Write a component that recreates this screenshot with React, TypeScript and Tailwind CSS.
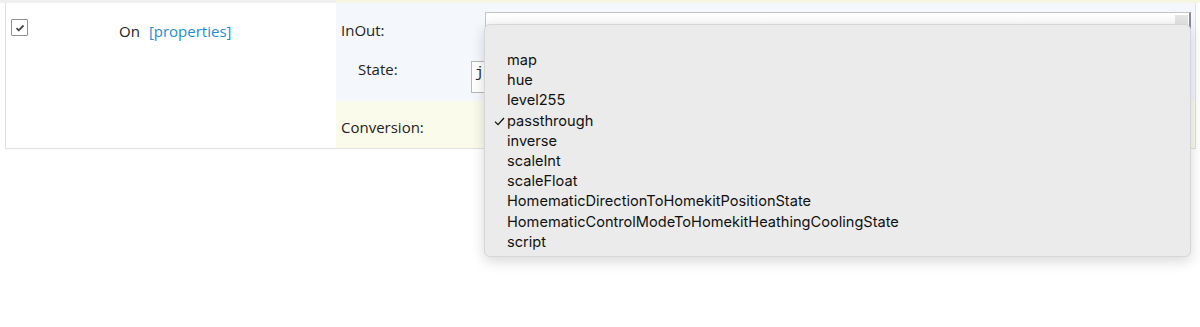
const OPTIONS = [
  'map',
  'hue',
  'level255',
  'passthrough',
  'inverse',
  'scaleInt',
  'scaleFloat',
  'HomematicDirectionToHomekitPositionState',
  'HomematicControlModeToHomekitHeathingCoolingState',
  'script',
];

const SELECTED = 'passthrough';

// Small checkbox like the browser default
const Checkbox = () => (
  <div className="w-[17px] h-[17px] border border-[#8f8f8f] rounded-[1px] bg-white flex items-center justify-center">
    <svg width="10" height="8" viewBox="0 0 10 8">
      <path d="M1.5 4.2 L3.8 6.3 L8.5 1.5" fill="none" stroke="#444" strokeWidth="1.8" />
    </svg>
  </div>
);

// Native-looking open select list
const OptionList = () => (
  <div className="absolute left-[484px] top-[24px] w-[707px] h-[233px] bg-[#ebebeb] rounded-[6px] border border-[#d6d6d6] shadow-[0_4px_14px_rgba(0,0,0,0.16)] pt-[25px] font-['Inter',sans-serif] text-[14.6px] text-[#111]">
    {OPTIONS.map((opt) => (
      <div key={opt} className="relative h-[20.2px] leading-[20.2px] pl-[22px]">
        {opt === SELECTED && (
          <svg className="absolute left-[9px] top-[6px]" width="11" height="9" viewBox="0 0 11 9">
            <path d="M1 4.6 L4 7.6 L10 1" fill="none" stroke="#111" strokeWidth="1.3" />
          </svg>
        )}
        {opt}
      </div>
    ))}
  </div>
);

export default function App() {
  return (
    <div className="relative w-[1200px] h-[327px] overflow-hidden bg-white font-['Open_Sans',sans-serif] text-[15px] text-[#222]">
      {/* bottom edge of the row above */}
      <div className="flex h-[3px]">
        <div className="w-[336px] bg-[#efefef]" />
        <div className="flex-1 bg-[#f6f6e2]" />
      </div>

      <div className="ml-[5px] w-[1191px] h-[146px] flex border-x border-b border-[#e0e0e0]">
        {/* enable + name */}
        <div className="w-[330px] flex items-start">
          <div className="ml-[5px] mt-[16px]">
            <Checkbox />
          </div>
          <div className="ml-[91px] mt-[18px] leading-[20px] flex gap-[9px]">
            <span>On</span>
            <span className="text-[#1a8ed1]">[properties]</span>
          </div>
        </div>

        {/* settings */}
        <div className="flex-1 flex flex-col">
          <div className="h-[98px] bg-[#f4f8fd] flex flex-col">
            <div className="h-[45px] flex items-start">
              <div className="w-[149px] pl-[5px] mt-[17px] leading-[20px]">InOut:</div>
              <div className="flex-1 mr-[4px] mt-[9px] h-[35px] flex justify-end border border-[#c4c4c4] border-r-[2px] border-r-[#8c8c8c] bg-gradient-to-b from-white to-[#f3f3f3]">
                <div className="w-[13px] h-[11px] mt-[2px] mr-[1px] bg-[#e4e4e4]" />
              </div>
            </div>
            <div className="flex-1 flex items-start">
              <div className="w-[135px] pl-[22px] mt-[11px] leading-[20px]">State:</div>
              <div className="flex-1 mr-[4px] mt-[13px] h-[32px] border border-[#b8b8b8] bg-white pl-[3px] font-['Liberation_Mono',monospace] text-[14px] leading-[22px]">
                j
              </div>
            </div>
          </div>
          <div className="flex-1 bg-[#fafbea] flex items-start">
            <div className="w-[149px] pl-[5px] mt-[16px] leading-[20px]">Conversion:</div>
            <div className="flex-1 mr-[4px] mt-[6px] h-[36px] border border-[#c4c4c4] border-r-[2px] border-r-[#8c8c8c] bg-white" />
          </div>
        </div>
      </div>

      <OptionList />
    </div>
  );
}
